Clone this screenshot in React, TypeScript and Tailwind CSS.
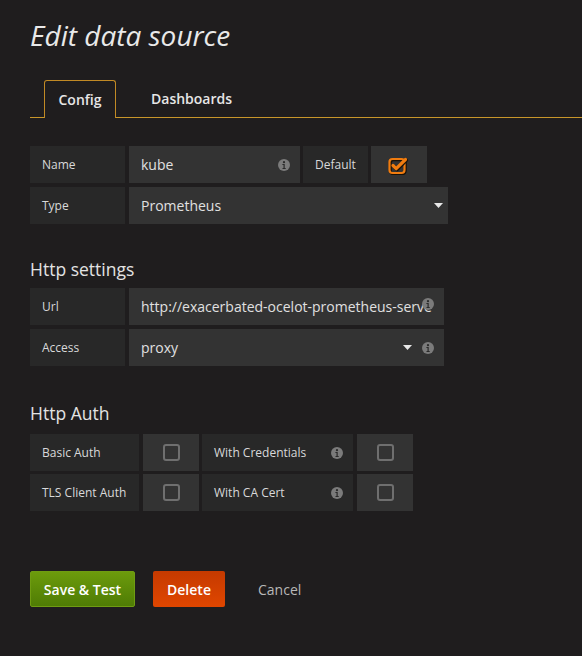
import React from "react";

const Info = ({ className = "" }: { className?: string }) => (
  <svg width="12" height="12" viewBox="0 0 12 12" className={className}>
    <circle cx="6" cy="6" r="6" fill="#7b7b7b" />
    <circle cx="6" cy="3.2" r="1.1" fill="#2a2a2a" />
    <path d="M4.4 5h2.3v3.9h1v1H4.5v-1h1V6h-1.1z" fill="#2a2a2a" />
  </svg>
);

const Caret = () => (
  <svg width="9" height="5" viewBox="0 0 9 5">
    <path d="M0 0h9L4.5 5z" fill="#e8e8e8" />
  </svg>
);

const Unchecked = () => (
  <div className="w-[17px] h-[17px] rounded-[3px] border-2 border-[#6f6f6f]" />
);

const Checked = () => (
  <svg width="22" height="20" viewBox="0 0 22 20">
    <rect x="1.5" y="4" width="15" height="14" rx="3" fill="none" stroke="#1a1208" strokeWidth="3" transform="translate(0.8 0.8)" />
    <rect x="1.5" y="4" width="15" height="14" rx="3" fill="none" stroke="#f07c10" strokeWidth="2.2" />
    <path d="M5 10.5l3.2 3.2L17.5 4.5" fill="none" stroke="#1a1208" strokeWidth="3.6" strokeLinecap="round" strokeLinejoin="round" transform="translate(0.8 0.8)" />
    <path d="M5 10.5l3.2 3.2L17.5 4.5" fill="none" stroke="#f07c10" strokeWidth="3.2" strokeLinecap="round" strokeLinejoin="round" />
  </svg>
);

const Label = ({ children, w }: { children: React.ReactNode; w: string }) => (
  <div className={`${w} h-[37px] bg-[#282828] flex items-center pl-[12px] text-[12px] text-[#d8d9da] shrink-0`}>
    {children}
  </div>
);

export default function App() {
  return (
    <div className="min-h-[656px] w-full bg-[#1f1d1e] pl-[30px] pt-[17px] font-['Open_Sans',sans-serif] text-[#d8d9da]">
      <h1 className="text-[28px] leading-[36px] italic text-[#e9e9e9]">Edit data source</h1>

      <div className="mt-[27px] flex items-end border-b border-[#c8962a] h-[38px]">
        <div className="ml-[14px] w-[72px] h-[38px] -mb-px border border-b-0 border-[#c18a25] rounded-t-[3px] bg-[#1f1d1e] flex items-center justify-center text-[14px] font-semibold text-[#e6e6e6]">
          Config
        </div>
        <div className="ml-[35px] h-[37px] flex items-center text-[14px] font-semibold text-[#e6e6e6]">
          Dashboards
        </div>
      </div>

      <div className="mt-[28px] flex flex-col gap-[4px]">
        <div className="flex gap-[4px]">
          <Label w="w-[95px]">Name</Label>
          <div className="w-[171px] h-[37px] bg-[#333333] flex items-center justify-between pl-[12px] pr-[10px] text-[14px] text-[#e0e0e0]">
            <span>kube</span>
            <Info />
          </div>
          <div className="w-[65px] h-[37px] bg-[#282828] flex items-center pl-[12px] text-[12px] text-[#d8d9da] -ml-px">Default</div>
          <div className="w-[56px] h-[37px] bg-[#333333] flex items-center justify-center -ml-px">
            <Checked />
          </div>
        </div>
        <div className="flex gap-[4px]">
          <Label w="w-[95px]">Type</Label>
          <div className="w-[319px] h-[37px] bg-[#333333] flex items-center justify-between pl-[12px] pr-[5px] text-[14px] text-[#e0e0e0]">
            <span>Prometheus</span>
            <Caret />
          </div>
        </div>
      </div>

      <h2 className="mt-[33px] mb-[7px] text-[17.5px] leading-[24px] text-[#e3e3e3]">Http settings</h2>
      <div className="flex flex-col gap-[4px]">
        <div className="flex gap-[4px]">
          <Label w="w-[95px]">Url</Label>
          <div className="relative w-[315px] h-[37px] bg-[#333333] flex items-center pl-[12px] text-[14px] text-[#e0e0e0]">
            <span className="whitespace-nowrap">http://exacerbated-ocelot-prometheus-serve</span>
            <div className="absolute left-[293px] top-[10px]"><Info /></div>
          </div>
        </div>
        <div className="flex gap-[4px]">
          <Label w="w-[95px]">Access</Label>
          <div className="w-[315px] h-[37px] bg-[#333333] flex items-center pl-[12px] pr-[10px] text-[14px] text-[#e0e0e0]">
            <span className="flex-1">proxy</span>
            <Caret />
            <Info className="ml-[10px]" />
          </div>
        </div>
      </div>

      <h2 className="mt-[35px] mb-[9px] text-[17.5px] leading-[24px] text-[#e3e3e3]">Http Auth</h2>
      <div className="flex flex-col gap-[3px]">
        {[
          ["Basic Auth", "With Credentials"],
          ["TLS Client Auth", "With CA Cert"],
        ].map(([a, b]) => (
          <div key={a} className="flex">
            <Label w="w-[109px]">{a}</Label>
            <div className="ml-[4px] w-[56px] h-[37px] bg-[#333333] flex items-center justify-center">
              <Unchecked />
            </div>
            <div className="ml-[3px] w-[151px] h-[37px] bg-[#282828] flex items-center justify-between pl-[12px] pr-[10px] text-[12px] text-[#d8d9da]">
              <span>{b}</span>
              <Info />
            </div>
            <div className="ml-[4px] w-[56px] h-[37px] bg-[#333333] flex items-center justify-center">
              <Unchecked />
            </div>
          </div>
        ))}
      </div>

      <div className="mt-[60px] flex items-center">
        <button className="w-[105px] h-[36px] rounded-[2px] border border-[#6f9c12] bg-gradient-to-b from-[#6c9b0c] to-[#4f7c05] text-white text-[14px] font-semibold">
          Save &amp; Test
        </button>
        <button className="ml-[18px] w-[72px] h-[36px] rounded-[2px] bg-gradient-to-b from-[#c53a00] to-[#e04600] text-white text-[14px] font-semibold">
          Delete
        </button>
        <span className="ml-[33px] text-[14px] text-[#b8b8b8]">Cancel</span>
      </div>
    </div>
  );
}
